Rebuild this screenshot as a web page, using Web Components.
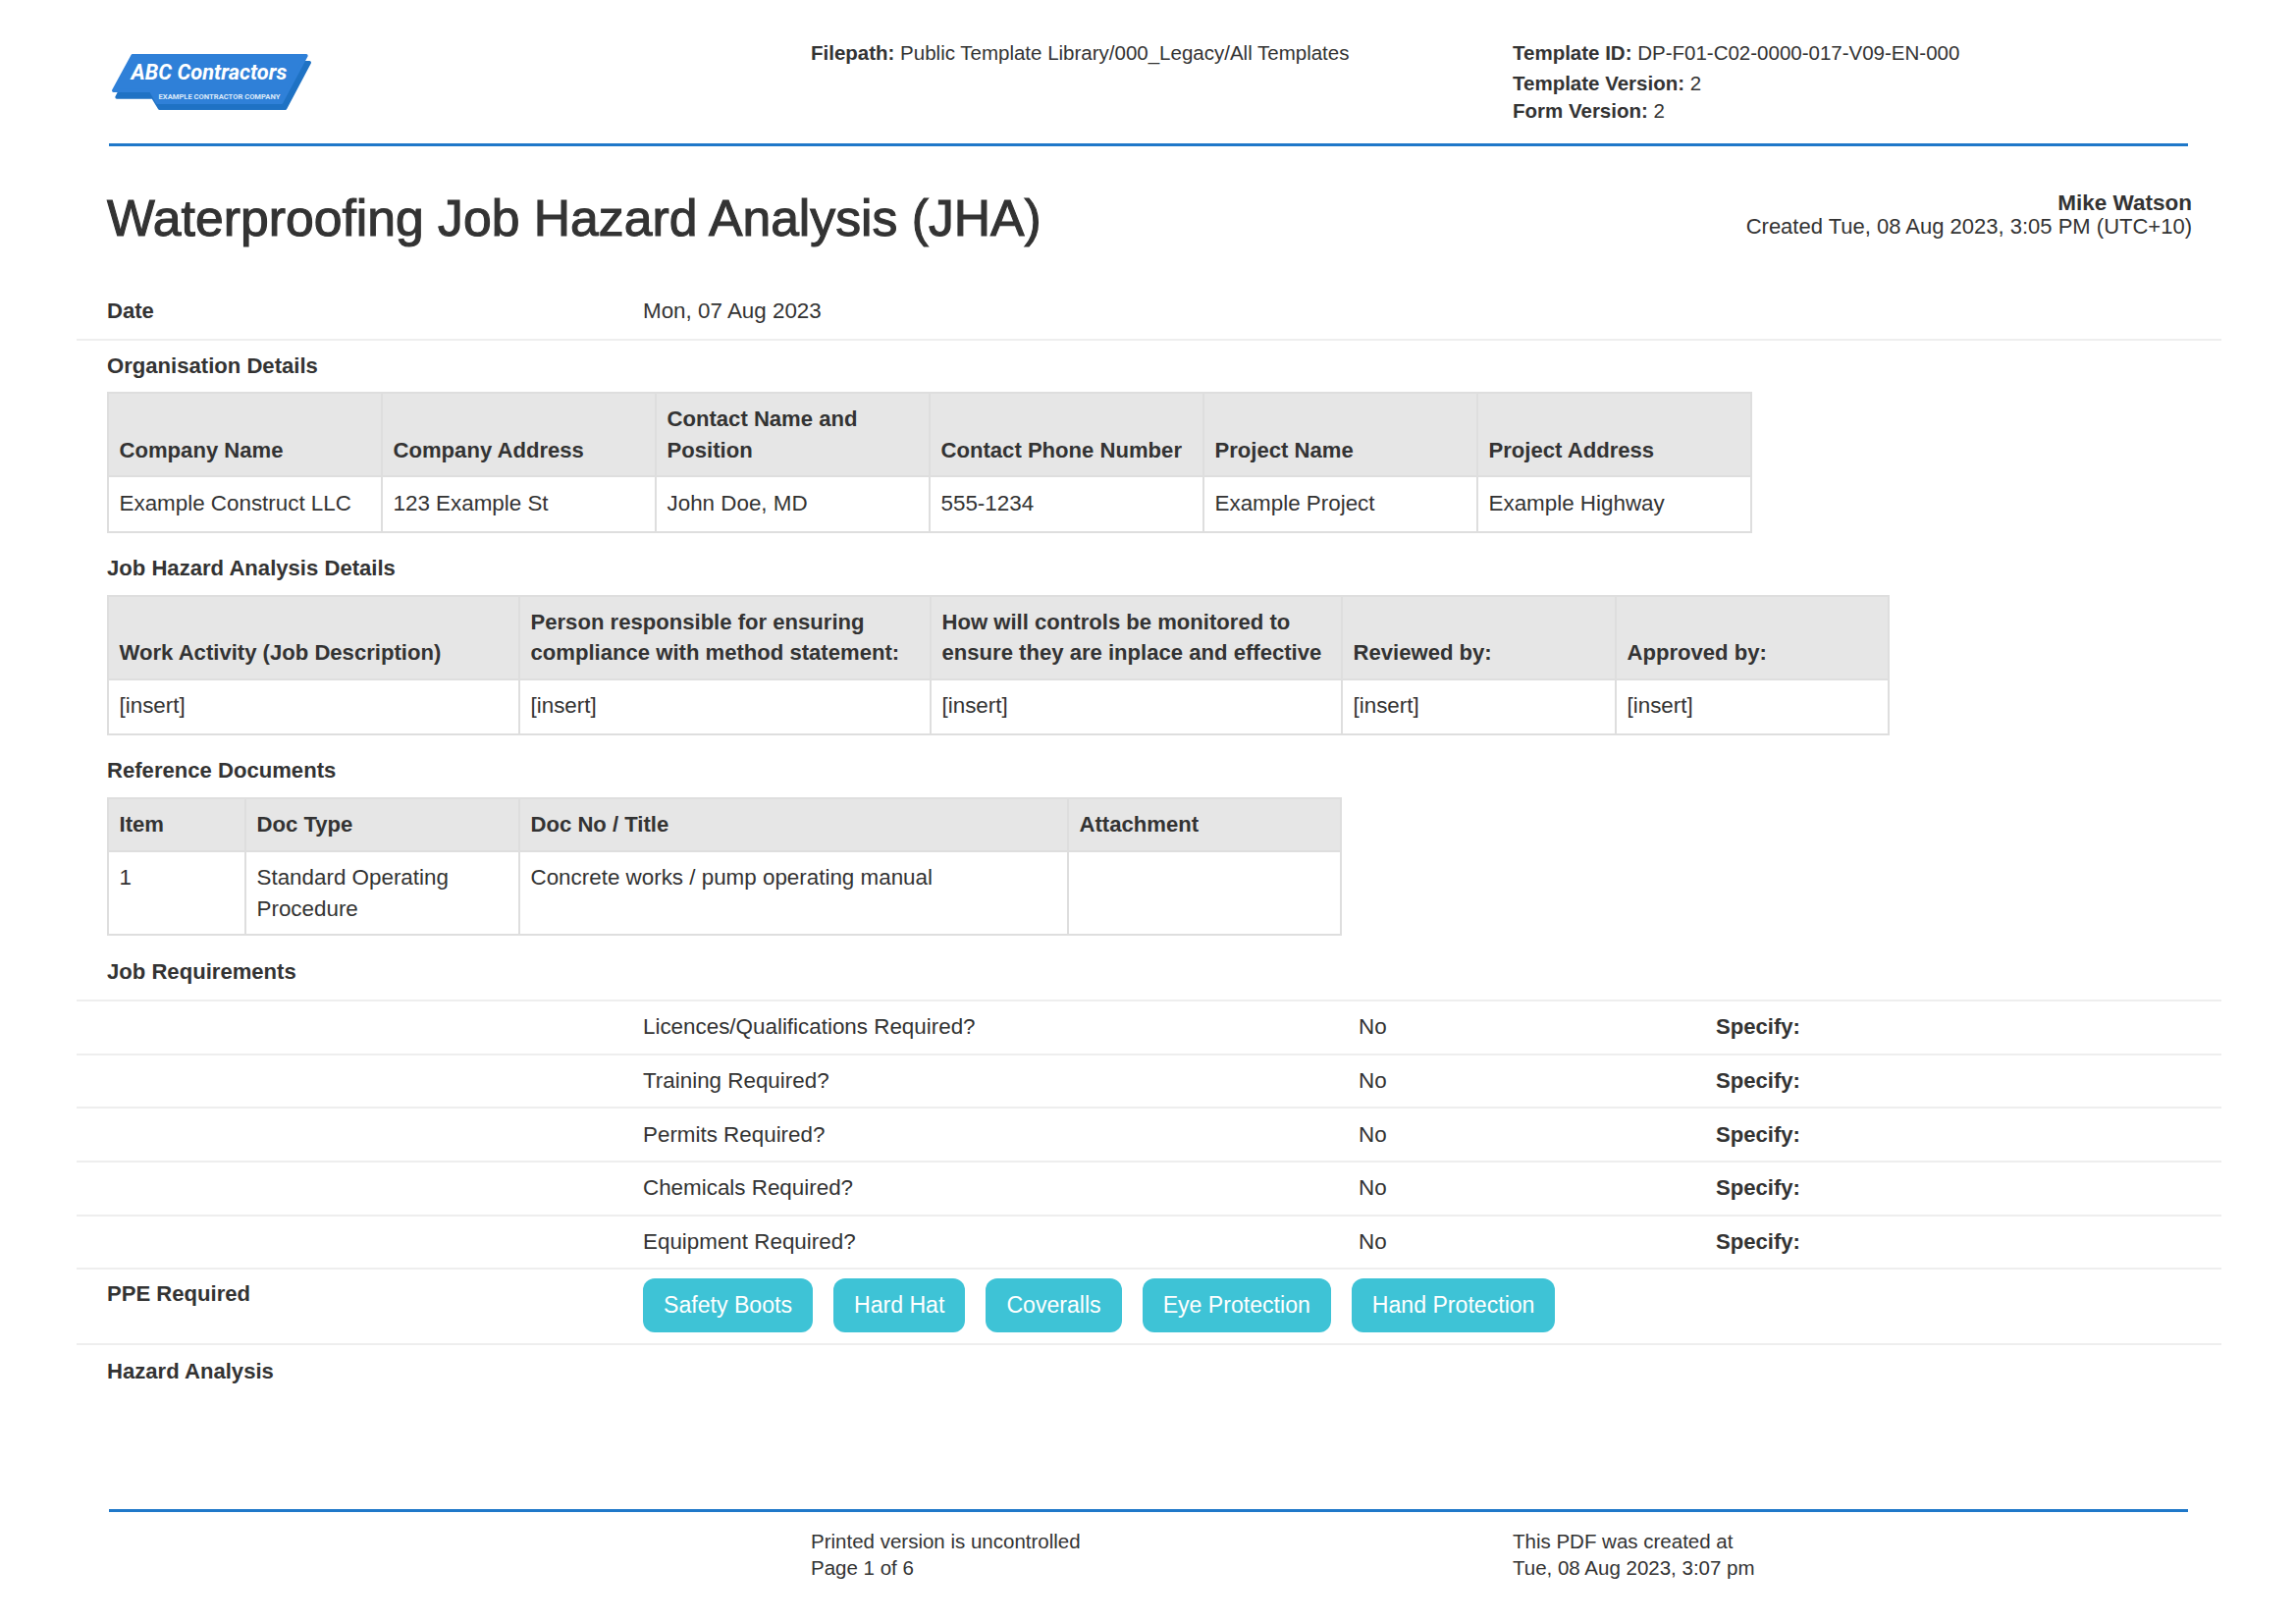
<!DOCTYPE html>
<html lang="en"><head><meta charset="utf-8"><title>Waterproofing JHA</title>
<style>
html,body{margin:0;padding:0;background:#fff}
body{font-family:"Liberation Sans",Arial,sans-serif;color:#333;font-size:22.4px;width:2339px;height:1653px;overflow:hidden}
</style></head><body>
<doc-header></doc-header>
<doc-title heading="Waterproofing Job Hazard Analysis (JHA)" author="Mike Watson" created="Created Tue, 08 Aug 2023, 3:05 PM (UTC+10)"></doc-title>
<doc-row label="Date" value="Mon, 07 Aug 2023" h="58"></doc-row>
<section-label first>Organisation Details</section-label>
<data-table cols="279,279,279,279,279,279" data='[["Company Name","Company Address","Contact Name and Position","Contact Phone Number","Project Name","Project Address"],["Example Construct LLC","123 Example St","John Doe, MD","555-1234","Example Project","Example Highway"]]'></data-table>
<section-label>Job Hazard Analysis Details</section-label>
<data-table cols="419,419,419,279,278" data='[["Work Activity (Job Description)","Person responsible for ensuring compliance with method statement:","How will controls be monitored to ensure they are inplace and effective","Reviewed by:","Approved by:"],["[insert]","[insert]","[insert]","[insert]","[insert]"]]'></data-table>
<section-label>Reference Documents</section-label>
<data-table cols="140,279,559,278" data='[["Item","Doc Type","Doc No / Title","Attachment"],["1","Standard Operating Procedure","Concrete works / pump operating manual",""]]'></data-table>
<section-label style="padding-top:21.5px;padding-bottom:12px">Job Requirements</section-label>
<doc-row top value="Licences/Qualifications Required?" answer="No" specify="Specify:" h="54.7"></doc-row>
<doc-row top value="Training Required?" answer="No" specify="Specify:" h="54.7"></doc-row>
<doc-row top value="Permits Required?" answer="No" specify="Specify:" h="54.7"></doc-row>
<doc-row top value="Chemicals Required?" answer="No" specify="Specify:" h="54.7"></doc-row>
<doc-row top value="Equipment Required?" answer="No" specify="Specify:" h="54.7"></doc-row>
<ppe-row label="PPE Required"><ppe-chip>Safety Boots</ppe-chip><ppe-chip>Hard Hat</ppe-chip><ppe-chip>Coveralls</ppe-chip><ppe-chip>Eye Protection</ppe-chip><ppe-chip>Hand Protection</ppe-chip></ppe-row>
<section-label first style="padding-top:11px">Hazard Analysis</section-label>
<doc-footer></doc-footer>
<script>
const esc=s=>String(s).replace(/&/g,'&amp;').replace(/</g,'&lt;').replace(/"/g,'&quot;');
class Base extends HTMLElement{
  constructor(){super();this.attachShadow({mode:'open'});}
  set(html){this.shadowRoot.innerHTML=html;}
}
customElements.define('doc-header',class extends Base{connectedCallback(){this.set(`<style>
:host{display:grid;grid-template-columns:715px 715px 1fr;margin:0 110px 0 111px;height:146px;border-bottom:3px solid #1f78c9;font-size:20.5px;color:#333}
b{font-weight:700}
.logo{margin:52px 0 0 1px;display:block}
.f,.t{padding-top:40px;line-height:28px}
.t div:nth-child(2){margin-top:3px}
</style>
<svg class="logo" width="208" height="62" viewBox="95 65 625 186" xmlns="http://www.w3.org/2000/svg">
<path d="M170 100 L706 100 L632 240 L247 240 L226 206 L116 206 Z" fill="#1f72c4" stroke="#1f72c4" stroke-width="10" stroke-linejoin="round"/>
<path d="M164 79 L696 79 L620 222 L240 222 L220 186 L106 186 Z" fill="#2f80d8" stroke="#2f80d8" stroke-width="10" stroke-linejoin="round"/>
<text x="160" y="153" font-family="Roboto" font-weight="700" font-style="italic" font-size="64" fill="#fff" textLength="477" lengthAdjust="spacingAndGlyphs">ABC Contractors</text>
<text x="244" y="212" font-family="Roboto" font-weight="700" font-size="20" fill="#dbe9f8" textLength="372" lengthAdjust="spacingAndGlyphs">EXAMPLE CONTRACTOR COMPANY</text>
</svg>
<div class="f"><b>Filepath:</b> Public Template Library/000_Legacy/All Templates</div>
<div class="t"><div><b>Template ID:</b> DP-F01-C02-0000-017-V09-EN-000</div><div><b>Template Version:</b> 2</div><div><b>Form Version:</b> 2</div></div>`);}});
customElements.define('doc-title',class extends Base{connectedCallback(){this.set(`<style>
:host{display:flex;justify-content:space-between;margin:0 106px 0 109px;height:140px;color:#333}
h1{margin:42px 0 0;font-size:51.7px;line-height:62px;font-weight:400;-webkit-text-stroke:1.1px #333}
.r{text-align:right;padding-top:46px;font-size:22px;line-height:24px}
b{display:block;font-size:22.5px}
</style><h1>${esc(this.getAttribute('heading'))}</h1><div class="r"><b>${esc(this.getAttribute('author'))}</b><span>${esc(this.getAttribute('created'))}</span></div>`);}});
customElements.define('doc-row',class extends Base{connectedCallback(){
  const g=n=>this.getAttribute(n)||'';const top=this.hasAttribute('top');
  this.set(`<style>
:host{display:grid;grid-template-columns:546px 729px 364px 1fr;align-items:center;margin:0 76px 0 78px;padding-left:31px;box-sizing:border-box;height:${g('h')}px;${top?'border-top':'border-bottom'}:2px solid #eee;line-height:32px;color:#333}
b{font-weight:700;font-size:22.1px}
</style><b>${esc(g('label'))}</b><span>${esc(g('value'))}</span><span>${esc(g('answer'))}</span><b>${esc(g('specify'))}</b>`);}});
customElements.define('section-label',class extends Base{connectedCallback(){
  const f=this.hasAttribute('first');
  this.set(`<style>
:host{display:block;margin-left:109px;font-weight:700;font-size:22.1px;line-height:32px;padding:${f?'10px 0 10px':'20px 0 11px'};color:#333}
</style><slot></slot>`);}});
customElements.define('data-table',class extends Base{connectedCallback(){
  const cols=this.getAttribute('cols').split(',');const [h,...rows]=JSON.parse(this.getAttribute('data'));
  this.set(`<style>
:host{display:block;margin-left:109px;color:#333}
table{border-collapse:collapse;table-layout:fixed;width:${cols.reduce((a,b)=>a+ +b,0)}px}
th,td{border:2.5px solid #dedede;padding:10px 10.5px;line-height:31.5px;text-align:left;font-weight:400;overflow:hidden}
th{background:#e6e6e6;font-weight:700;font-size:22.1px;vertical-align:bottom}
td{vertical-align:top;padding-top:10.5px;padding-bottom:9.5px;height:34.5px}
</style><table><colgroup>${cols.map(c=>`<col style="width:${c}px">`).join('')}</colgroup>
<thead><tr>${h.map(c=>`<th>${esc(c)}</th>`).join('')}</tr></thead>
<tbody>${rows.map(r=>`<tr>${r.map(c=>`<td>${esc(c)}</td>`).join('')}</tr>`).join('')}</tbody></table>`);}});
customElements.define('ppe-row',class extends Base{connectedCallback(){this.set(`<style>
:host{display:grid;grid-template-columns:546px 1fr;margin:0 76px 0 78px;padding:9px 0 9px 31px;border-top:2px solid #eee;border-bottom:2px solid #eee;height:79px;box-sizing:border-box;line-height:32px}
b{font-weight:700;font-size:22.1px;color:#333}
.c{display:flex;gap:21px;align-items:flex-start}
</style><b>${esc(this.getAttribute('label'))}</b><div class="c"><slot></slot></div>`);}});
customElements.define('ppe-chip',class extends Base{connectedCallback(){this.set(`<style>
:host{display:block;background:#3ec3d6;color:#fff;border-radius:12px;height:55px;line-height:55px;padding:0 21px;white-space:nowrap;font-size:23.1px}
</style><slot></slot>`);}});
customElements.define('doc-footer',class extends Base{connectedCallback(){this.set(`<style>
:host{display:grid;grid-template-columns:715px 715px 1fr;margin:113.5px 110px 0 111px;border-top:3px solid #1f78c9;padding-top:16.5px;font-size:20.5px;line-height:27px;color:#333}
.a{grid-column:2}
</style><div class="a">Printed version is uncontrolled<br>Page 1 of 6</div><div>This PDF was created at<br>Tue, 08 Aug 2023, 3:07 pm</div>`);}});
</script>
</body></html>
